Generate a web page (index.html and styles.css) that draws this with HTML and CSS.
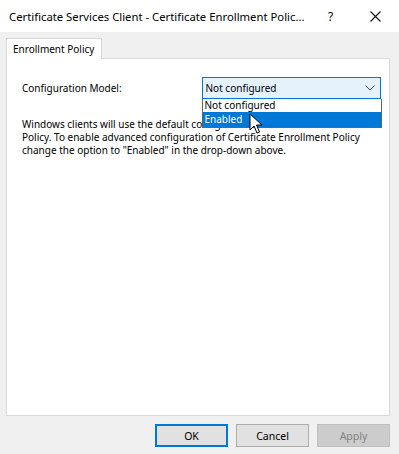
FILE: index.html
```html
<!DOCTYPE html>
<html>
<head>
<meta charset="utf-8">
<link rel="stylesheet" href="styles.css">
</head>
<body>
<div class="window">
  <div class="titlebar">
    <span class="title">Certificate Services Client - Certificate Enrollment Polic...</span>
    <span class="help">?</span>
    <span class="close">
      <svg width="11" height="11" viewBox="0 0 11 11"><path d="M0.5 0.5 L10.5 10.5 M10.5 0.5 L0.5 10.5" stroke="#111" stroke-width="1.1" fill="none"/></svg>
    </span>
  </div>
  <div class="body">
    <div class="tabs">
      <div class="tab">Enrollment Policy</div>
    </div>
    <div class="panel">
      <div class="row">
        <span class="label">Configuration Model:</span>
        <div class="combo-wrap">
          <div class="combo">
            <span>Not configured</span>
            <svg class="chev" width="10" height="6" viewBox="0 0 10 6"><path d="M0.5 0.5 L5 5 L9.5 0.5" stroke="#444" stroke-width="1" fill="none"/></svg>
          </div>
          <div class="list">
            <div class="item">Not configured</div>
            <div class="item sel">Enabled</div>
          </div>
          <svg class="cursor" width="14" height="22" viewBox="0 0 14 22"><path d="M1 1 L1 17 L5 13 L8 20 L10.5 19 L7.5 12 L13 12 Z" fill="#fff" stroke="#000" stroke-width="1"/></svg>
        </div>
      </div>
      <p class="desc">Windows clients will use the default configuration of Certificate Enrollment Policy. To enable advanced configuration of Certificate Enrollment Policy change the option to "Enabled" in the drop-down above.</p>
    </div>
    <div class="footer">
      <button class="btn ok">OK</button>
      <button class="btn">Cancel</button>
      <button class="btn disabled">Apply</button>
    </div>
  </div>
</div>
</body>
</html>
```
FILE: styles.css
```css
* { box-sizing: border-box; }
html, body { margin: 0; padding: 0; }
body {
  font-family: "Noto Sans", "Liberation Sans", sans-serif;
  font-size: 10px;
  color: #000;
  background: #f0f0f0;
}
.window {
  width: 399px;
  height: 454px;
  display: flex;
  flex-direction: column;
  overflow: hidden;
}
.titlebar {
  height: 32px;
  background: #fff;
  display: flex;
  align-items: center;
  padding-left: 9px;
  flex: none;
}
.title {
  font-size: 11.3px;
  color: #000;
  white-space: nowrap;
}
.help {
  margin-left: auto;
  width: 10px;
  font-size: 12px;
  margin-right: 14px;
}
.close {
  width: 46px;
  display: flex;
  justify-content: center;
  margin-right: 1px;
}
.close svg { display: block; }
.body {
  flex: 1;
  background: #f0f0f0;
  padding: 6px 9px 0 6px;
  display: flex;
  flex-direction: column;
}
.tabs {
  display: flex;
  height: 20px;
}
.tab {
  width: 96px;
  height: 21px;
  background: #fff;
  border: 1px solid #d9d9d9;
  border-bottom: none;
  padding: 3px 0 0 6px;
  position: relative;
  z-index: 1;
  white-space: nowrap;
}
.panel {
  height: 358px;
  background: #fff;
  border: 1px solid #d9d9d9;
  padding: 18px 8px 0 15px;
}
.row {
  display: flex;
  align-items: center;
  height: 22px;
}
.label {
  width: 180px;
}
.combo-wrap {
  position: relative;
  width: 180px;
}
.combo {
  height: 22px;
  border: 1px solid #0078d7;
  background: #e5f1fb;
  display: flex;
  align-items: center;
  padding-left: 3px;
  padding-right: 5px;
}
.combo span { flex: 1; white-space: nowrap; }
.chev { display: block; }
.list {
  position: absolute;
  left: 0;
  top: 22px;
  width: 180px;
  border: 1px solid #646464;
  border-top: none;
  background: #fff;
  z-index: 5;
}
.item {
  height: 13px;
  line-height: 13px;
  padding-left: 2px;
  white-space: nowrap;
}
.item.sel {
  height: 15px;
  line-height: 14px;
  background: #0078d7;
  color: #fff;
}
.cursor {
  position: absolute;
  left: 47px;
  top: 36px;
  z-index: 6;
}
.desc {
  margin: 19px 0 0 0;
  line-height: 13px;
  width: 352px;
}
.footer {
  display: flex;
  justify-content: flex-end;
  gap: 8px;
  padding-top: 8px;
}
.btn {
  width: 73px;
  height: 23px;
  border: 1px solid #adadad;
  background: #e1e1e1;
  font-family: "Noto Sans", "Liberation Sans", sans-serif;
  font-size: 10.5px;
  color: #000;
  padding: 0;
}
.btn.ok {
  border: 2px solid #0078d7;
}
.btn.disabled {
  background: #cccccc;
  border-color: #bfbfbf;
  color: #838383;
}
```
